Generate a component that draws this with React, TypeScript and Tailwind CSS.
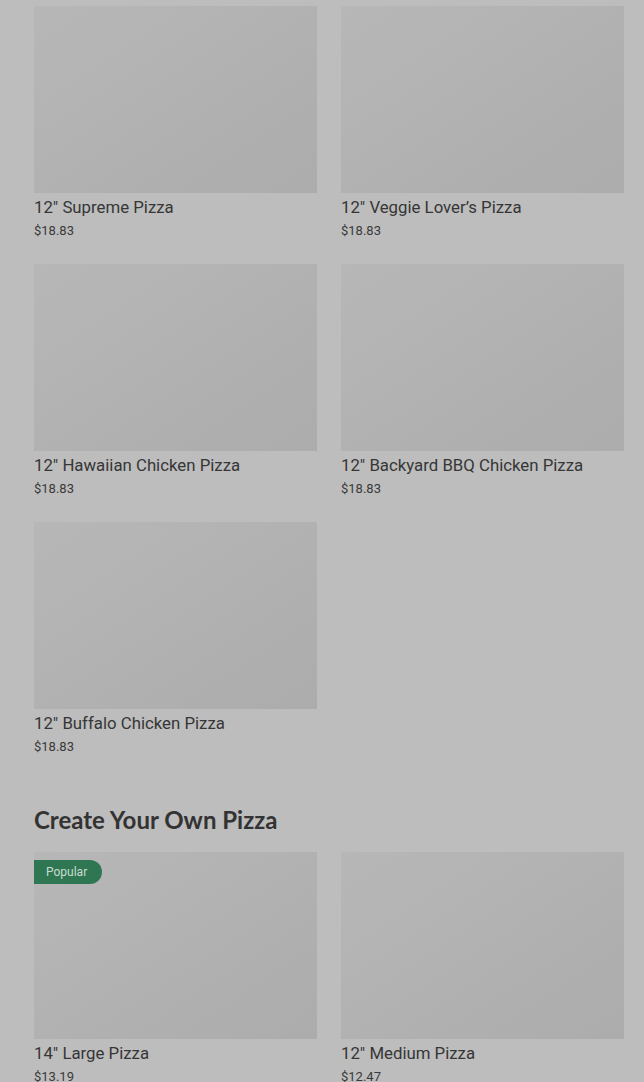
type Item = { name: string; price: string; badge?: string };

const PIZZAS: Item[] = [
  { name: '12" Supreme Pizza', price: "$18.83" },
  { name: '12" Veggie Lover’s Pizza', price: "$18.83" },
  { name: '12" Hawaiian Chicken Pizza', price: "$18.83" },
  { name: '12" Backyard BBQ Chicken Pizza', price: "$18.83" },
  { name: '12" Buffalo Chicken Pizza', price: "$18.83" },
];

const CREATE: Item[] = [
  { name: '14" Large Pizza', price: "$13.19", badge: "Popular" },
  { name: '12" Medium Pizza', price: "$12.47" },
];

function Card({ item }: { item: Item }) {
  return (
    <div className="flex flex-col">
      <div className="relative h-[187px] w-full bg-gradient-to-br from-[#b7b7b7] to-[#acacac]">
        {item.badge && (
          <span className="absolute left-0 top-[8px] flex h-[24px] items-center rounded-r-[12px] bg-[#2f7753] pl-[12px] pr-[15px] text-[12px] text-[#c9dccf]">
            {item.badge}
          </span>
        )}
      </div>
      <p className="mt-[2px] text-[16.8px] leading-[24px] text-[#363636]">{item.name}</p>
      <p className="mt-[3px] text-[13px] leading-[18px] text-[#3a3a3a]">{item.price}</p>
    </div>
  );
}

export default function App() {
  return (
    <div className="min-h-screen bg-[#bdbdbd] pl-[34px] pr-[20px] pt-[6px] font-['Roboto',sans-serif]">
      <div className="grid grid-cols-2 gap-x-6 gap-y-[24px]">
        {PIZZAS.map((p) => (
          <Card key={p.name} item={p} />
        ))}
      </div>

      <h2 className="mt-[48px] mb-[16px] font-['Lato',sans-serif] text-[24px] font-bold leading-[32px] text-[#333333]">
        Create Your Own Pizza
      </h2>
      <div className="grid grid-cols-2 gap-x-6 gap-y-[24px]">
        {CREATE.map((p) => (
          <Card key={p.name} item={p} />
        ))}
      </div>
    </div>
  );
}
